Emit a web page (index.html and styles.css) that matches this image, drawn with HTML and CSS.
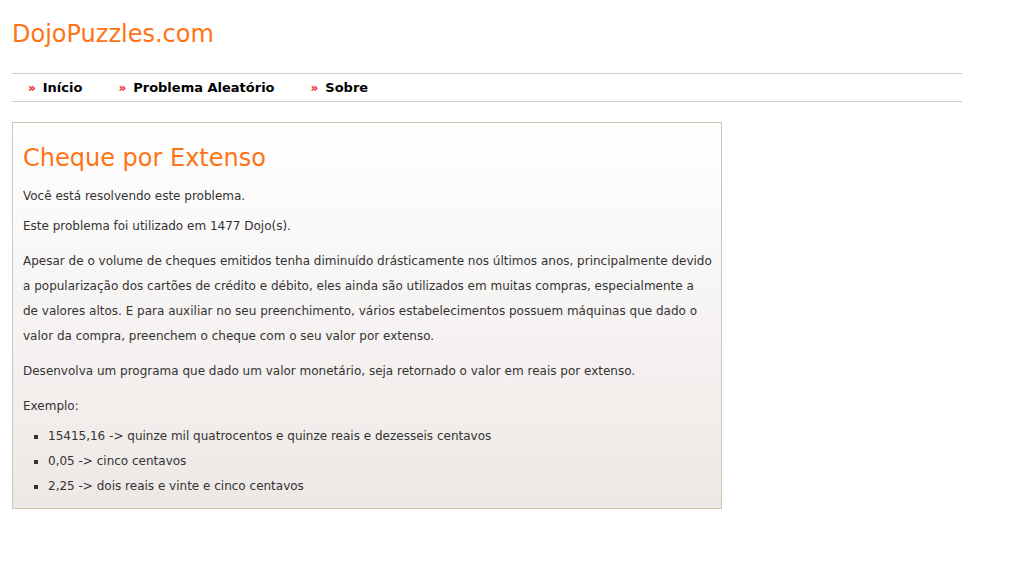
FILE: index.html
```html
<!DOCTYPE html>
<html lang="pt">
<head>
<meta charset="utf-8">
<title>DojoPuzzles.com</title>
<link rel="stylesheet" href="styles.css">
</head>
<body>
<div class="page">
  <header class="header">
    <a class="logo" href="#">DojoPuzzles.com</a>
  </header>
  <nav class="nav">
    <a class="nav-item" href="#"><span class="raquo">»</span>Início</a>
    <a class="nav-item" href="#"><span class="raquo">»</span>Problema Aleatório</a>
    <a class="nav-item" href="#"><span class="raquo">»</span>Sobre</a>
  </nav>
  <main class="box">
    <h1 class="title">Cheque por Extenso</h1>
    <p class="meta">Você está resolvendo este problema.</p>
    <p class="meta">Este problema foi utilizado em 1477 Dojo(s).</p>
    <div class="desc">
      <p>Apesar de o volume de cheques emitidos tenha diminuído drásticamente nos últimos anos, principalmente devido a popularização dos cartões de crédito e débito, eles ainda são utilizados em muitas compras, especialmente a de&nbsp;valores altos. E para auxiliar no seu preenchimento, vários estabelecimentos possuem máquinas que dado o valor da compra, preenchem o cheque com o seu valor por extenso.</p>
      <p>Desenvolva um programa que dado um valor monetário, seja retornado o valor em reais por extenso.</p>
      <p>Exemplo:</p>
      <ul class="examples">
        <li>15415,16 -&gt; quinze mil quatrocentos e quinze reais e dezesseis centavos</li>
        <li>0,05 -&gt; cinco centavos</li>
        <li>2,25 -&gt; dois reais e vinte e cinco centavos</li>
      </ul>
    </div>
  </main>
</div>
</body>
</html>
```
FILE: styles.css
```css
html, body {
  margin: 0;
  padding: 0;
  background: #ffffff;
}
body {
  font-family: "DejaVu Sans", Verdana, sans-serif;
  color: #333333;
}
.page {
  padding: 0 12px;
}
.header {
  height: 73px;
  display: flex;
  align-items: flex-start;
}
.logo {
  margin-top: 19px;
  font-size: 24px;
  color: #ff7315;
  text-decoration: none;
  line-height: 30px;
}
.nav {
  width: 950px;
  border-top: 1px solid #d0ccc8;
  border-bottom: 1px solid #d0ccc8;
  height: 29px;
  display: flex;
  align-items: center;
  padding-left: 16px;
  box-sizing: border-box;
  gap: 36px;
}
.nav-item {
  font-size: 13px;
  font-weight: bold;
  color: #000000;
  text-decoration: none;
}
.raquo {
  color: #e8141e;
  font-size: 12px;
  margin-right: 7px;
}
.box {
  margin-top: 20px;
  width: 710px;
  box-sizing: border-box;
  border: 1px solid #cfc8b0;
  background: linear-gradient(to bottom, #ffffff 0%, #ede8e6 100%);
  padding: 19px 8px 9px 10px;
  font-size: 12px;
}
.title {
  margin: 0 0 10px 0;
  font-size: 24px;
  font-weight: normal;
  color: #ff7315;
  line-height: 32px;
}
.meta {
  margin: 0 0 5px 0;
  line-height: 25px;
}
.desc p {
  margin: 10px 0 0 0;
  line-height: 25px;
}
.examples {
  margin: 5px 0 0 0;
  padding-left: 25px;
  list-style: square;
  line-height: 25px;
}
```
